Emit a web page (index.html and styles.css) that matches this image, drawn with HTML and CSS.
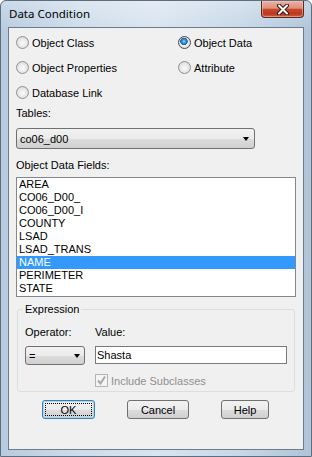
FILE: index.html
```html
<!DOCTYPE html>
<html lang="en">
<head>
  <meta charset="UTF-8">
  <title>Data Condition</title>
  <link rel="stylesheet" href="styles.css">
</head>
<body>

<div class="window">
  <div class="titlebar">
    <span class="title">Data Condition</span>
    <div class="close-btn">
      <svg width="14" height="11" viewBox="0 0 14 11">
        <path d="M3 1.5 L11 9.5 M11 1.5 L3 9.5" stroke="#3b1812" stroke-width="4" stroke-linecap="round"/>
        <path d="M3 1.5 L11 9.5 M11 1.5 L3 9.5" stroke="#fff" stroke-width="2" stroke-linecap="round"/>
      </svg>
    </div>
  </div>

  <div class="client">
    <div class="source-options">
      <label class="radio"><span class="radio-mark"></span>Object Class</label>
      <label class="radio"><span class="radio-mark checked"></span>Object Data</label>
      <label class="radio"><span class="radio-mark"></span>Object Properties</label>
      <label class="radio"><span class="radio-mark"></span>Attribute</label>
      <label class="radio"><span class="radio-mark"></span>Database Link</label>
    </div>

    <div class="field-label tables-label">Tables:</div>
    <div class="combo tables-combo">
      <span>co06_d00</span>
      <span class="arrow"></span>
    </div>

    <div class="field-label fields-label">Object Data Fields:</div>
    <ul class="listbox">
      <li>AREA</li>
      <li>CO06_D00_</li>
      <li>CO06_D00_I</li>
      <li>COUNTY</li>
      <li>LSAD</li>
      <li>LSAD_TRANS</li>
      <li class="selected">NAME</li>
      <li>PERIMETER</li>
      <li>STATE</li>
    </ul>

    <fieldset class="expression">
      <legend>Expression</legend>
      <div class="expr-grid">
        <div class="field-label">Operator:</div>
        <div class="field-label">Value:</div>
        <div class="combo op-combo">
          <span>=</span>
          <span class="arrow"></span>
        </div>
        <div class="textbox">Shasta</div>
        <div class="check-row">
          <span class="checkbox">
            <svg width="11" height="11" viewBox="0 0 11 11">
              <path d="M2 5.5 L4.5 8.5 L9 1.5" fill="none" stroke="#a9a9a9" stroke-width="2"/>
            </svg>
          </span>
          <span class="disabled-text">Include Subclasses</span>
        </div>
      </div>
    </fieldset>

    <div class="buttons">
      <div class="btn btn-default"><span>OK</span></div>
      <div class="btn btn-cancel">Cancel</div>
      <div class="btn btn-help">Help</div>
    </div>
  </div>
</div>

</body>
</html>
```

FILE: styles.css
```css
html, body {
  margin: 0;
  padding: 0;
}
body {
  font-family: "Liberation Sans", Arial, sans-serif;
  font-size: 11px;
  color: #000;
  width: 312px;
  height: 457px;
  overflow: hidden;
}
.window {
  box-sizing: border-box;
  width: 312px;
  height: 457px;
  display: flex;
  flex-direction: column;
  border: 1px solid #5e6e80;
  border-radius: 6px 6px 0 0;
  background:
    linear-gradient(180deg, rgba(255,255,255,0.3), rgba(255,255,255,0) 30px),
    linear-gradient(90deg, #b7cbdf 0%, #cddcea 25%, #d8e4f0 50%, #c6d7e7 78%, #afc4d9 100%);
}
.titlebar {
  height: 26px;
  display: flex;
  align-items: flex-start;
  padding-left: 8px;
}
.title {
  font-family: "Noto Sans", "Open Sans", sans-serif;
  font-size: 11.5px;
  line-height: 16px;
  margin-top: 5px;
  color: #000;
}
.close-btn {
  margin-left: auto;
  margin-right: 7px;
  width: 41px;
  height: 16px;
  border: 1px solid #5a2a20;
  border-top: none;
  border-radius: 0 0 4px 4px;
  background: linear-gradient(180deg, #ebb1a3 0%, #df8e7b 45%, #c9472c 52%, #b8391f 80%, #d0603c 100%);
  box-shadow: inset 0 0 0 1px rgba(255, 210, 200, 0.45);
  display: flex;
  align-items: center;
  justify-content: center;
}
.client {
  flex: 1;
  margin: 0 7px 6px 7px;
  border: 1px solid #6c7a89;
  background: #f0f0f0;
  padding: 2px 7px 0 7px;
}
.source-options {
  display: grid;
  grid-template-columns: 162px auto;
  grid-auto-rows: 25px;
}
.radio {
  display: flex;
  align-items: center;
  gap: 3px;
}
.radio-mark {
  box-sizing: border-box;
  width: 13px;
  height: 13px;
  border-radius: 50%;
  border: 1px solid #909090;
  background: radial-gradient(circle at 50% 55%, #fbfbfb 0, #e6e6e6 55%, #cfcfcf 100%);
}
.radio-mark.checked {
  border-color: #4a4a4a;
  background:
    radial-gradient(circle at 45% 40%, #a5dcff 0, #3d9ce6 1.5px, #1a5fa8 3.5px, transparent 4px),
    radial-gradient(circle at 50% 55%, #fbfbfb 0, #e6e6e6 55%, #cfcfcf 100%);
}
.field-label {
  line-height: 14px;
}
.tables-label {
  margin-top: 1px;
}
.fields-label {
  margin-top: 9px;
}
.combo {
  box-sizing: border-box;
  display: flex;
  align-items: center;
  justify-content: space-between;
  border: 1px solid #707070;
  border-radius: 3px;
  padding: 0 5px 0 3px;
  background: linear-gradient(180deg, #f2f2f2 0%, #ebebeb 50%, #dddddd 51%, #cfcfcf 100%);
}
.tables-combo {
  width: 239px;
  height: 21px;
  margin-top: 8px;
}
.arrow {
  width: 0;
  height: 0;
  border-left: 3.5px solid transparent;
  border-right: 3.5px solid transparent;
  border-top: 4px solid #000;
}
.listbox {
  box-sizing: border-box;
  list-style: none;
  margin: 5px 0 0 0;
  padding: 0 0 1px 0;
  width: 280px;
  height: 120px;
  border: 1px solid #828790;
  background: #fff;
}
.listbox li {
  height: 13px;
  line-height: 13px;
  padding-left: 2px;
}
.listbox li.selected {
  background: #3399ff;
  color: #fff;
}
.expression {
  margin: 5px 1px 0 1px;
  padding: 0 0 4px 5px;
  border: 1px solid #d5dfe5;
  border-radius: 3px;
}
.expression legend {
  padding: 0 2px;
  line-height: 14px;
}
.expr-grid {
  display: grid;
  grid-template-columns: 60px 192px;
  grid-template-rows: 14px 20px 14px;
  column-gap: 10px;
  row-gap: 7px;
  margin: 9px 0 0 2px;
}
.expr-grid .check-row {
  grid-column: 2;
  margin-top: 1px;
}
.op-combo {
  height: 19px;
  padding-right: 4px;
}
.textbox {
  box-sizing: border-box;
  height: 18px;
  border: 1px solid #7a7a7a;
  background: #fff;
  padding-left: 1px;
  line-height: 16px;
}
.check-row {
  display: flex;
  align-items: center;
  gap: 3px;
}
.checkbox {
  box-sizing: border-box;
  width: 13px;
  height: 13px;
  border: 1px solid #b4b4b4;
  background: #f4f4f4;
  display: flex;
  align-items: center;
  justify-content: center;
}
.disabled-text {
  color: #8f8f8f;
  line-height: 14px;
}
.buttons {
  display: flex;
  gap: 32px;
  margin: 8px 0 0 26px;
}
.btn {
  box-sizing: border-box;
  height: 19px;
  border: 1px solid #707070;
  border-radius: 3px;
  background: linear-gradient(180deg, #f2f2f2 0%, #ebebeb 50%, #dddddd 51%, #cfcfcf 100%);
  display: flex;
  align-items: center;
  justify-content: center;
}
.btn-default {
  width: 53px;
  border-color: #3c7fb1;
  box-shadow: inset 0 0 0 1px #a8d8f2;
  padding: 2px;
}
.btn-default span {
  box-sizing: border-box;
  width: 100%;
  height: 100%;
  border: 1px dotted #000;
  display: flex;
  align-items: center;
  justify-content: center;
}
.btn-cancel {
  width: 62px;
}
.btn-help {
  width: 48px;
}
```
